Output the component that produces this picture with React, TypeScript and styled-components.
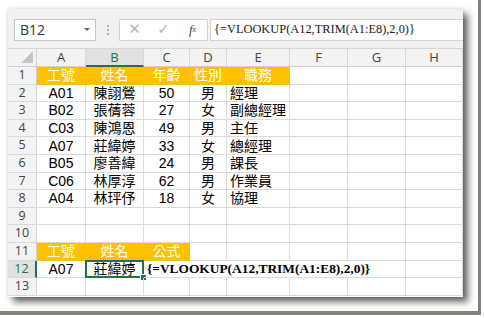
import React from "react";
import styled, { createGlobalStyle } from "styled-components";

const GlobalStyle = createGlobalStyle`
  body {
    margin: 0;
    background: #fff;
  }
`;

const GREEN = "#217346";
const ORANGE = "#ffc000";
const GRID = "#dadada";

const Frame = styled.div`
  box-sizing: border-box;
  width: 481px;
  height: 315px;
  padding: 9px 0 0 8px;
  border-right: 3px solid #80837a;
  border-bottom: 4px solid #80837a;
`;

const Window = styled.div`
  width: 455px;
  height: 288px;
  background: #fff;
  display: flex;
  flex-direction: column;
  overflow: hidden;
  box-shadow: 5px 5px 7px rgba(0, 0, 0, 0.6), 0 0 4px rgba(0, 0, 0, 0.15);
`;

const Toolbar = styled.div`
  box-sizing: border-box;
  height: 40px;
  padding: 2px 0 0 6px;
  display: flex;
  align-items: center;
  background: #f1f1f1;
  border-bottom: 1px solid #d5d5d5;
`;

const NameBox = styled.div`
  box-sizing: border-box;
  width: 82px;
  height: 22px;
  padding: 0 5px;
  display: flex;
  align-items: center;
  justify-content: space-between;
  background: #fff;
  border: 1px solid #c6c6c6;
  font: 14px/1 "Open Sans", sans-serif;
  color: #333;
`;

const Caret = styled.span`
  width: 0;
  height: 0;
  border-left: 3px solid transparent;
  border-right: 3px solid transparent;
  border-top: 3px solid #666;
`;

const Dots = styled.div`
  margin: 0 10px 0 11px;
  display: flex;
  flex-direction: column;
  gap: 2px;
  span {
    width: 2px;
    height: 2px;
    background: #b0b0b0;
  }
`;

const ButtonGroup = styled.div`
  box-sizing: border-box;
  height: 22px;
  display: flex;
  background: #fff;
  border: 1px solid #d4d4d4;
`;

const ToolButton = styled.span<{ $dark?: boolean }>`
  width: 29px;
  display: flex;
  align-items: center;
  justify-content: center;
  font: ${(p) => (p.$dark ? "italic 13px/1 \"Liberation Serif\", serif" : "15px/1 \"DejaVu Sans\", sans-serif")};
  color: ${(p) => (p.$dark ? "#444" : "#b4b4b4")};
`;

const FormulaInput = styled.div`
  box-sizing: border-box;
  flex: 1;
  height: 22px;
  margin-left: 2px;
  padding-left: 3px;
  display: flex;
  align-items: center;
  background: #fff;
  border: 1px solid #d4d4d4;
  border-right: none;
  font: 12.4px/1 "Liberation Serif", serif;
  color: #222;
  white-space: nowrap;
`;

const Sheet = styled.div`
  display: grid;
  grid-template-columns: 29px 49px 58px 46px 37px 63px 58px 58px 57px;
  grid-template-rows: 18px repeat(13, 17.6px);
`;

const Corner = styled.div`
  box-sizing: border-box;
  position: relative;
  background: #f3f3f3;
  border-right: 1px solid #d0d0d0;
  border-bottom: 1px solid #d0d0d0;
  &::after {
    content: "";
    position: absolute;
    right: 3px;
    bottom: 3px;
    border-left: 12px solid transparent;
    border-bottom: 12px solid #c6c6c6;
  }
`;

const ColHead = styled.div<{ $active?: boolean }>`
  box-sizing: border-box;
  display: flex;
  align-items: center;
  justify-content: center;
  background: ${(p) => (p.$active ? "#e1e1e1" : "#f3f3f3")};
  border-right: 1px solid #d8d8d8;
  border-bottom: ${(p) => (p.$active ? `2px solid ${GREEN}` : "1px solid #d0d0d0")};
  font: 13px/1 "Open Sans", sans-serif;
  color: ${(p) => (p.$active ? GREEN : "#444")};
`;

const RowHead = styled.div<{ $active?: boolean }>`
  box-sizing: border-box;
  display: flex;
  align-items: center;
  justify-content: center;
  background: ${(p) => (p.$active ? "#e1e1e1" : "#f3f3f3")};
  border-right: ${(p) => (p.$active ? `2px solid ${GREEN}` : "1px solid #d0d0d0")};
  border-bottom: 1px solid #d8d8d8;
  font: 12.5px/1 "Open Sans", sans-serif;
  color: ${(p) => (p.$active ? GREEN : "#444")};
`;

const Cell = styled.div<{
  $fill?: boolean;
  $left?: boolean;
  $open?: boolean;
  $selected?: boolean;
  $formula?: boolean;
}>`
  box-sizing: border-box;
  position: relative;
  display: flex;
  align-items: center;
  justify-content: ${(p) => (p.$left ? "flex-start" : "center")};
  padding-left: ${(p) => (p.$left ? "3px" : "0")};
  white-space: nowrap;
  overflow: visible;
  background: ${(p) => (p.$fill ? ORANGE : "transparent")};
  border-right: 1px solid ${(p) => (p.$fill ? ORANGE : p.$open ? "transparent" : GRID)};
  border-bottom: 1px solid ${(p) => (p.$fill ? ORANGE : GRID)};
  font: ${(p) =>
    p.$formula
      ? "bold 13.4px/1 \"Liberation Serif\", serif"
      : "14px/1 \"Liberation Sans\", \"Noto Sans CJK TC\", sans-serif"};
  color: ${(p) => (p.$fill ? "#fff" : "#000")};
  z-index: ${(p) => (p.$formula ? 1 : 0)};
  ${(p) =>
    p.$selected &&
    `
    &::after {
      content: "";
      position: absolute;
      left: -1px;
      top: -1px;
      right: -1px;
      bottom: -1px;
      border: 2px solid ${GREEN};
    }
    &::before {
      content: "";
      position: absolute;
      right: -4px;
      bottom: -4px;
      width: 5px;
      height: 5px;
      background: ${GREEN};
      border: 1px solid #fff;
      z-index: 2;
    }
  `}
`;

const cols = ["A", "B", "C", "D", "E", "F", "G", "H"];

type CellDef = {
  text?: string;
  fill?: boolean;
  left?: boolean;
  open?: boolean;
  selected?: boolean;
  formula?: boolean;
};

const people = [
  ["A01", "陳詡鶯", "50", "男", "經理"],
  ["B02", "張蒨蓉", "27", "女", "副總經理"],
  ["C03", "陳鴻恩", "49", "男", "主任"],
  ["A07", "莊緯婷", "33", "女", "總經理"],
  ["B05", "廖善緯", "24", "男", "課長"],
  ["C06", "林厚淳", "62", "男", "作業員"],
  ["A04", "林玶伃", "18", "女", "協理"],
];

const blank = (): CellDef[] => cols.map(() => ({}));

const buildRows = (): CellDef[][] => {
  const rows: CellDef[][] = [];
  rows.push([
    ...["工號", "姓名", "年齡", "性別", "職務"].map((t) => ({ text: t, fill: true })),
    {},
    {},
    {},
  ]);
  people.forEach((p) => {
    rows.push([
      ...p.slice(0, 4).map((t) => ({ text: t })),
      { text: p[4], left: true },
      {},
      {},
      {},
    ]);
  });
  rows.push(blank());
  rows.push(blank());
  rows.push([
    ...["工號", "姓名", "公式"].map((t) => ({ text: t, fill: true })),
    {},
    {},
    {},
    {},
    {},
  ]);
  rows.push([
    { text: "A07" },
    { text: "莊緯婷", selected: true },
    { text: "{=VLOOKUP(A12,TRIM(A1:E8),2,0)}", left: true, formula: true, open: true },
    { open: true },
    { open: true },
    { open: true },
    {},
    {},
  ]);
  rows.push(blank());
  return rows;
};

export default function App() {
  const rows = buildRows();
  return (
    <>
      <GlobalStyle />
      <Frame>
        <Window>
          <Toolbar>
            <NameBox>
              B12
              <Caret />
            </NameBox>
            <Dots>
              <span />
              <span />
              <span />
            </Dots>
            <ButtonGroup>
              <ToolButton>✕</ToolButton>
              <ToolButton>✓</ToolButton>
              <ToolButton $dark>
                f<sub style={{ fontSize: 8 }}>x</sub>
              </ToolButton>
            </ButtonGroup>
            <FormulaInput>{"{=VLOOKUP(A12,TRIM(A1:E8),2,0)}"}</FormulaInput>
          </Toolbar>
          <Sheet>
            <Corner />
            {cols.map((c) => (
              <ColHead key={c} $active={c === "B"}>
                {c}
              </ColHead>
            ))}
            {rows.map((row, r) => (
              <React.Fragment key={r}>
                <RowHead $active={r === 11}>{r + 1}</RowHead>
                {row.map((cell, c) => (
                  <Cell
                    key={c}
                    $fill={cell.fill}
                    $left={cell.left}
                    $open={cell.open}
                    $selected={cell.selected}
                    $formula={cell.formula}
                  >
                    {cell.text}
                  </Cell>
                ))}
              </React.Fragment>
            ))}
          </Sheet>
        </Window>
      </Frame>
    </>
  );
}
